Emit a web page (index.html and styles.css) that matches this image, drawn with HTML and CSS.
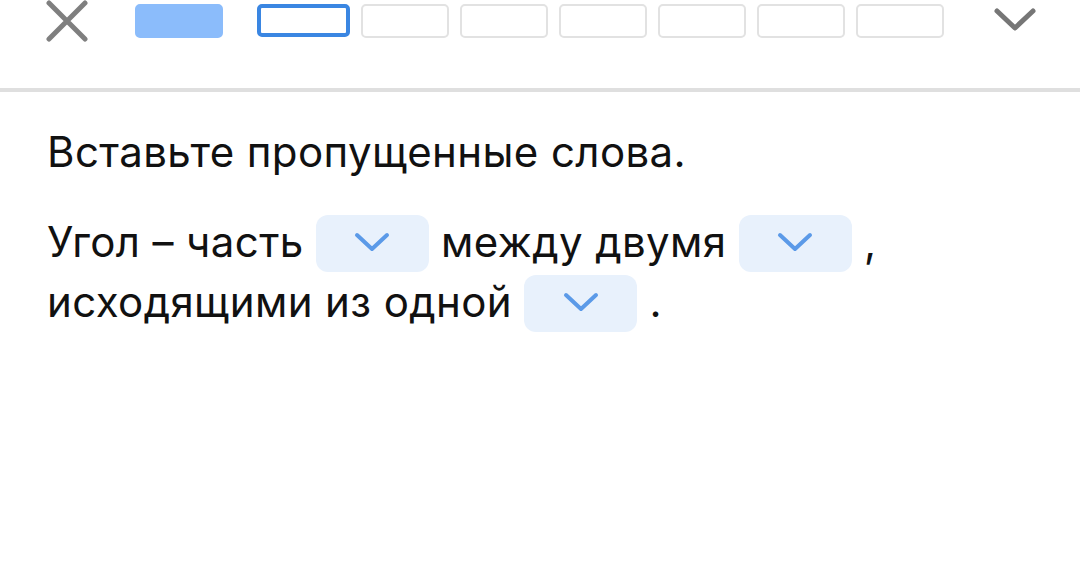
FILE: index.html
```html
<html>
  <head>
    <title>Вставьте пропущенные слова</title>
    <meta charset="utf-8" />
    <meta name="viewport" content="width=device-width, initial-scale=1" />
    <link rel="stylesheet" href="styles.css">
  </head>
  <body>
    <div class="topbar">
      <button class="close" aria-label="Закрыть">
        <svg width="42" height="42" viewBox="0 0 42 42">
          <path d="M3 3 L39 39 M39 3 L3 39" stroke="#7f7f7f" stroke-width="5" stroke-linecap="round" fill="none"/>
        </svg>
      </button>
      <div class="steps">
        <span class="step done"></span>
        <span class="step current"></span>
        <span class="step"></span>
        <span class="step"></span>
        <span class="step"></span>
        <span class="step"></span>
        <span class="step"></span>
        <span class="step"></span>
      </div>
      <button class="more" aria-label="Развернуть">
        <svg width="44" height="26" viewBox="0 0 44 26">
          <path d="M4 5 L22 22 L40 5" stroke="#767676" stroke-width="5" stroke-linecap="round" stroke-linejoin="round" fill="none"/>
        </svg>
      </button>
    </div>

    <div class="task">
      <p class="question">Вставьте пропущенные слова.</p>
      <p class="sentence">
        Угол – часть
        <span class="gap"><svg width="36" height="22" viewBox="0 0 36 22"><path d="M3 3 L18 17 L33 3" stroke="#5b9ae8" stroke-width="4" stroke-linecap="round" stroke-linejoin="round" fill="none"/></svg></span>
        между двумя
        <span class="gap"><svg width="36" height="22" viewBox="0 0 36 22"><path d="M3 3 L18 17 L33 3" stroke="#5b9ae8" stroke-width="4" stroke-linecap="round" stroke-linejoin="round" fill="none"/></svg></span>
        ,<br>
        исходящими из одной
        <span class="gap"><svg width="36" height="22" viewBox="0 0 36 22"><path d="M3 3 L18 17 L33 3" stroke="#5b9ae8" stroke-width="4" stroke-linecap="round" stroke-linejoin="round" fill="none"/></svg></span>
        .
      </p>
    </div>
  </body>
</html>
```

FILE: styles.css
```css
body {
  margin: 0;
  font-family: Inter, "Noto Sans", sans-serif;
  color: #111;
  background: #fff;
}

button {
  border: none;
  background: none;
  padding: 0;
}

.topbar {
  display: flex;
  align-items: flex-start;
  height: 92px;
  padding: 0 43px 0 46px;
  border-bottom: 4px solid #dfdfdf;
  box-sizing: border-box;
}

.close {
  width: 42px;
  height: 42px;
}

.steps {
  display: flex;
  gap: 11px;
  margin-left: 47px;
  margin-top: 4px;
  flex: 1;
}

.step {
  width: 88px;
  height: 34px;
  border: 2px solid #e2e2e2;
  border-radius: 5px;
  box-sizing: border-box;
}

.step.done {
  background: #8bbcfb;
  border-color: #8bbcfb;
  margin-right: 23px;
}

.step.current {
  width: 93px;
  height: 33px;
  border: 4px solid #3a86e2;
}

.more {
  width: 44px;
  height: 26px;
  margin-top: 6px;
}

.task {
  padding: 0 47px;
}

.question,
.sentence {
  font-size: 42px;
  letter-spacing: 0.4px;
}

.question {
  line-height: 44px;
  margin: 38px 0 0;
}

.sentence {
  line-height: 60px;
  margin: 38px 0 0;
}

.gap {
  display: inline-flex;
  align-items: center;
  justify-content: center;
  width: 113px;
  height: 57px;
  background: #e8f1fc;
  border-radius: 12px;
  vertical-align: 3px;
}
```
